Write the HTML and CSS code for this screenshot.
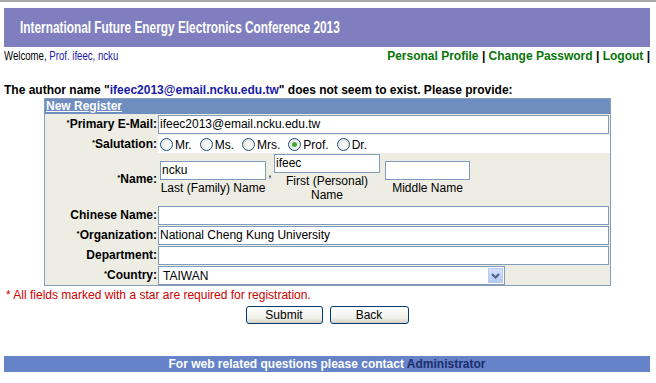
FILE: index.html
```html
<!DOCTYPE html>
<html>
<head>
<meta charset="utf-8">
<link rel="stylesheet" href="styles.css">
</head>
<body>
<div class="topline"></div>
<div class="page">
  <div class="banner"><span class="title">International Future Energy Electronics Conference 2013</span></div>
  <div class="userbar">
    <span class="welcome">Welcome, <a href="#">Prof. ifeec, ncku</a></span>
    <span class="links"><a href="#">Personal Profile</a> | <a href="#">Change Password</a> | <a href="#">Logout</a> |</span>
  </div>
  <p class="msg">The author name "<span class="em">ifeec2013@email.ncku.edu.tw</span>" does not seem to exist. Please provide:</p>
  <table class="form">
    <tr><th colspan="2" class="head"><a href="#">New Register</a></th></tr>
    <tr>
      <td class="lbl"><sup>*</sup>Primary E-Mail:</td>
      <td class="fld"><div class="input wide">ifeec2013@email.ncku.edu.tw</div></td>
    </tr>
    <tr>
      <td class="lbl"><sup>*</sup>Salutation:</td>
      <td class="fld white">
        <div class="radios">
          <span class="radio"></span><span class="opt">Mr.</span>
          <span class="radio"></span><span class="opt">Ms.</span>
          <span class="radio"></span><span class="opt">Mrs.</span>
          <span class="radio on"></span><span class="opt">Prof.</span>
          <span class="radio"></span><span class="opt">Dr.</span>
        </div>
      </td>
    </tr>
    <tr>
      <td class="lbl"><sup>*</sup>Name:</td>
      <td class="fld">
        <div class="names">
          <div class="namecol last"><div class="input nm">ncku</div><div class="cap">Last (Family) Name</div></div>
          <span class="comma">,</span>
          <div class="namecol first"><div class="input nm">ifeec</div><div class="cap">First (Personal)<br>Name</div></div>
          <div class="namecol mid"><div class="input nm small"></div><div class="cap">Middle Name</div></div>
        </div>
      </td>
    </tr>
    <tr>
      <td class="lbl">Chinese Name:</td>
      <td class="fld"><div class="input wide"></div></td>
    </tr>
    <tr>
      <td class="lbl"><sup>*</sup>Organization:</td>
      <td class="fld"><div class="input wide">National Cheng Kung University</div></td>
    </tr>
    <tr>
      <td class="lbl">Department:</td>
      <td class="fld"><div class="input wide"></div></td>
    </tr>
    <tr>
      <td class="lbl"><sup>*</sup>Country:</td>
      <td class="fld"><div class="select"><span class="val">TAIWAN</span><span class="arrow"><svg width="9" height="6" viewBox="0 0 9 6"><path d="M1 1 L4.5 4.5 L8 1" fill="none" stroke="#4d6185" stroke-width="2"/></svg></span></div></td>
    </tr>
  </table>
  <p class="note">* All fields marked with a star are required for registration.</p>
  <div class="buttons"><button class="btn">Submit</button><button class="btn">Back</button></div>
  <div class="footer">For web related questions please contact <a href="#">Administrator</a></div>
</div>
</body>
</html>
```
FILE: styles.css
```css
html, body {
  margin: 0;
  padding: 0;
  background: #fff;
}
body {
  font-family: "Liberation Sans", Arial, sans-serif;
  font-size: 12px;
  color: #000;
}
.topline {
  height: 2px;
  background: #a8a8a8;
}
.page {
  padding: 6px 6px 0 4px;
}
.banner {
  background: #7f7fbf;
  color: #fff;
  font-weight: bold;
  font-size: 16px;
  height: 39px;
  line-height: 39px;
  padding-left: 16px;
  white-space: nowrap;
}
.title {
  display: inline-block;
  transform: scaleX(0.74);
  transform-origin: left center;
}
.userbar {
  display: flex;
  justify-content: space-between;
  height: 16px;
  line-height: 16px;
  margin-top: 1px;
}
.welcome {
  display: inline-block;
  font-size: 13px;
  transform: scaleX(0.74);
  transform-origin: left center;
  white-space: nowrap;
}
.welcome a {
  color: #1a1aa6;
  text-decoration: none;
}
.links {
  font-weight: bold;
  color: #000;
}
.links a {
  color: #087508;
  text-decoration: none;
}
.msg {
  margin: 19px 0 0 0;
  font-weight: bold;
  line-height: 15px;
  height: 15px;
}
.msg .em {
  color: #1a1aa6;
}
.form {
  margin-left: 40px;
  width: 567px;
  border: 1px solid #8b9bb8;
  border-collapse: separate;
  border-spacing: 0;
  background: #eeede4;
}
.form td, .form th {
  padding: 0;
}
.head {
  background: #6e8ec0;
  text-align: left;
  height: 15px;
  line-height: 15px;
  padding-left: 1px !important;
}
.head a {
  color: #fff;
  font-weight: bold;
  text-decoration: underline;
}
.lbl {
  width: 113px;
  text-align: right;
  font-weight: bold;
  white-space: nowrap;
  padding-right: 1px !important;
}
.lbl sup {
  font-size: 8px;
  vertical-align: 3px;
  font-weight: bold;
}
.fld {
  padding: 1px 1px 0 0 !important;
}
.fld.white {
  background: #fff;
  border-top: 1px solid #eeede4;
}
.input {
  box-sizing: border-box;
  border: 1px solid #7f9db9;
  background: #fff;
  height: 19px;
  line-height: 17px;
  padding-left: 1px;
  white-space: nowrap;
  overflow: hidden;
}
.input.wide {
  width: 451px;
}
.radios {
  display: flex;
  align-items: center;
  height: 17px;
  padding-left: 2px;
}
.radio {
  box-sizing: border-box;
  width: 13px;
  height: 13px;
  border-radius: 50%;
  border: 1px solid #1c5180;
  background: radial-gradient(circle at 60% 60%, #fff 0, #dcdcd7 100%);
  margin: 0 2px 0 0;
  position: relative;
  flex: none;
}
.opt {
  margin-right: 8px;
}
.radio.on::after {
  content: "";
  position: absolute;
  left: 3px;
  top: 3px;
  width: 5px;
  height: 5px;
  border-radius: 50%;
  background: #3fae2d;
}
.names {
  display: flex;
  align-items: flex-start;
  padding: 0 0 2px 2px;
  height: 49px;
}
.namecol {
  display: flex;
  flex-direction: column;
  align-items: center;
  width: 106px;
}
.namecol.last {
  margin-top: 7px;
}
.namecol.mid {
  margin-top: 7px;
  margin-left: 5px;
  width: 85px;
}
.input.nm {
  width: 106px;
}
.input.nm.small {
  width: 85px;
}
.cap {
  text-align: center;
  line-height: 14px;
  margin-top: 1px;
  white-space: nowrap;
}
.comma {
  width: 8px;
  text-align: center;
  margin-top: 12px;
}
.select {
  box-sizing: border-box;
  width: 347px;
  height: 19px;
  border: 1px solid #7f9db9;
  background: #fff;
  display: flex;
  justify-content: space-between;
  align-items: center;
  padding: 0 1px 0 4px;
}
.select .arrow {
  width: 15px;
  height: 15px;
  background: linear-gradient(#d4e1fb, #b5c9f3);
  border: 1px solid #b9cbf0;
  box-sizing: border-box;
  display: flex;
  align-items: center;
  justify-content: center;
}
.note {
  color: #cc0000;
  margin: 2px 0 0 2px;
  line-height: 15px;
}
.buttons {
  display: flex;
  justify-content: center;
  gap: 7px;
  margin-top: 3px;
}
.btn {
  font-family: inherit;
  font-size: 12px;
  width: 77px;
  height: 18px;
  padding: 0;
  border: 1px solid #003c74;
  border-radius: 3px;
  background: linear-gradient(#ffffff, #f0f0ea 70%, #d6d0c5);
  color: #000;
  line-height: 14px;
}
.btn + .btn {
  width: 79px;
}
.footer {
  margin-top: 32px;
  background: #6483c8;
  color: #fff;
  font-weight: bold;
  text-align: center;
  height: 16px;
  line-height: 16px;
}
.footer a {
  color: #1c2e6e;
  text-decoration: none;
}
```
